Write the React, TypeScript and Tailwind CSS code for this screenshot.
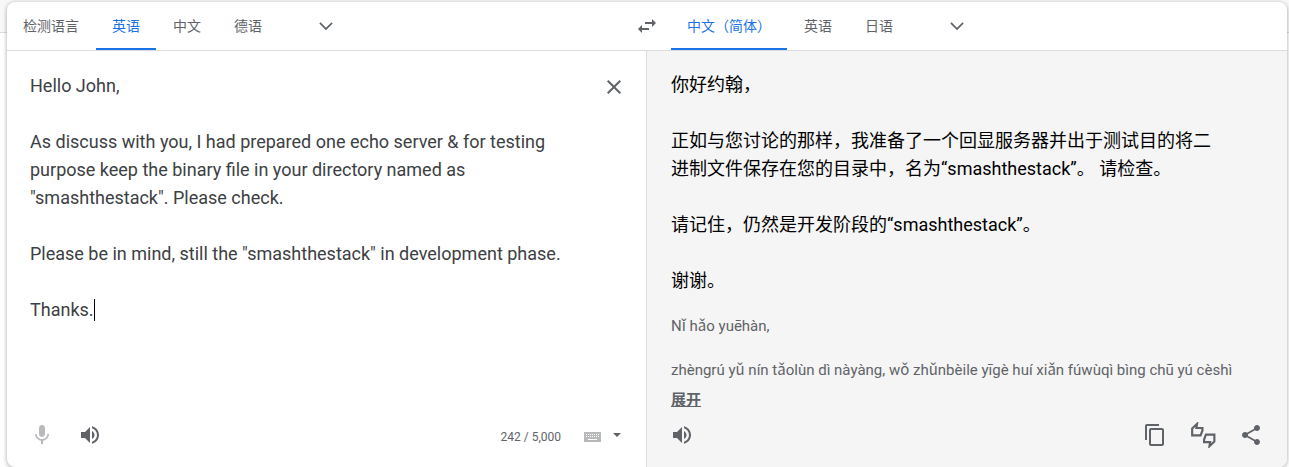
import { useState } from "react";
import type { ReactNode } from "react";

const SOURCE_TEXT = `Hello John,

As discuss with you, I had prepared one echo server & for testing purpose keep the binary file in your directory named as "smashthestack". Please check.

Please be in mind, still the "smashthestack" in development phase.

Thanks.`;

const TARGET_TEXT = `你好约翰，

正如与您讨论的那样，我准备了一个回显服务器并出于测试目的将二进制文件保存在您的目录中，名为“smashthestack”。 请检查。

请记住，仍然是开发阶段的“smashthestack”。

谢谢。`;

const PINYIN = `Nǐ hǎo yuēhàn,

zhèngrú yǔ nín tǎolùn dì nàyàng, wǒ zhǔnbèile yīgè huí xiǎn fúwùqì bìng chū yú cèshì`;

const ICONS = {
  chevron: "M5.41 7.59L4 9l8 8 8-8-1.41-1.41L12 14.17",
  swap: "M6.99 11L3 15l3.99 4v-3H14v-2H6.99v-3zM21 9l-3.99-4v3H10v2h7.01v3L21 9z",
  close: "M19 6.41L17.59 5 12 10.59 6.41 5 5 6.41 10.59 12 5 17.59 6.41 19 12 13.41 17.59 19 19 17.59 13.41 12z",
  mic: "M12 14c1.66 0 3-1.34 3-3V5c0-1.66-1.34-3-3-3S9 3.34 9 5v6c0 1.66 1.34 3 3 3zM17.3 11c0 3-2.54 5.1-5.3 5.1S6.7 14 6.7 11H5c0 3.41 2.72 6.23 6 6.72V21h2v-3.28c3.28-.48 6-3.3 6-6.72h-1.7z",
  sound:
    "M3 9v6h4l5 5V4L7 9H3zm13.5 3c0-1.77-1.02-3.29-2.5-4.03v8.05c1.48-.73 2.5-2.25 2.5-4.02zM14 3.23v2.06c2.89.86 5 3.54 5 6.71s-2.11 5.85-5 6.71v2.06c4.01-.91 7-4.49 7-8.77s-2.99-7.86-7-8.77z",
  copy: "M16 1H4c-1.1 0-2 .9-2 2v14h2V3h12V1zm3 4H8c-1.1 0-2 .9-2 2v14c0 1.1.9 2 2 2h11c1.1 0 2-.9 2-2V7c0-1.1-.9-2-2-2zm0 16H8V7h11v14z",
  share:
    "M18 16.08c-.76 0-1.44.3-1.96.77L8.91 12.7c.05-.23.09-.46.09-.7s-.04-.47-.09-.7l7.05-4.11c.54.5 1.25.81 2.04.81 1.66 0 3-1.34 3-3s-1.34-3-3-3-3 1.34-3 3c0 .24.04.47.09.7L8.04 9.81C7.5 9.31 6.79 9 6 9c-1.66 0-3 1.34-3 3s1.34 3 3 3c.79 0 1.5-.31 2.04-.81l7.12 4.16c-.05.21-.08.43-.08.65 0 1.61 1.31 2.92 2.92 2.92s2.92-1.31 2.92-2.92-1.31-2.92-2.92-2.92z",
};

function Icon({ d, className = "size-6" }: { d: string; className?: string }) {
  return (
    <svg viewBox="0 0 24 24" fill="currentColor" aria-hidden="true" className={className}>
      <path d={d} />
    </svg>
  );
}

function IconButton({ label, children, className = "" }: { label: string; children: ReactNode; className?: string }) {
  return (
    <button type="button" aria-label={label} className={`flex size-12 shrink-0 items-center justify-center ${className}`}>
      {children}
    </button>
  );
}

function LanguageTabs({ label, languages, initial }: { label: string; languages: string[]; initial: string }) {
  const [active, setActive] = useState(initial);
  return (
    <div className="flex h-12 items-stretch">
      <div role="tablist" aria-label={label} className="flex gap-px">
        {languages.map((name) => (
          <button
            key={name}
            type="button"
            role="tab"
            aria-selected={name === active}
            onClick={() => setActive(name)}
            className={`border-b-2 px-4 pt-0.5 text-sm whitespace-nowrap ${
              name === active ? "border-[#1a73e8] text-[#1a73e8]" : "border-transparent"
            }`}
          >
            {name}
          </button>
        ))}
      </div>
      <button type="button" aria-label="更多语言" className="ml-9 flex w-6 items-center justify-center">
        <Icon d={ICONS.chevron} className="size-5" />
      </button>
    </div>
  );
}

function ThumbsIcon() {
  return (
    <svg viewBox="0 0 24 24" fill="none" stroke="currentColor" strokeWidth="2" aria-hidden="true" className="size-[26px]">
      <path d="M2 6l4.500-4.300-.6 3.800H11.500v2.300L9.800 12.300H2z" />
      <path d="M22.500 18l-4.500 4.300.6-3.800H13v-2.300l1.700-4.500h7.800z" />
    </svg>
  );
}

export default function App() {
  const [text, setText] = useState(SOURCE_TEXT);
  return (
    <div className="bg-white font-['Roboto','Noto_Sans_CJK_SC',sans-serif] text-[#5f6368]">
      <div className="h-[33px] border-b border-[#dadce0] bg-[#f8f8f8]" />
      <main className="relative -mt-[31px] pr-0.5 pl-[7px]">
        <div className="overflow-hidden rounded-lg bg-white shadow-[0_1px_4px_rgba(0,0,0,0.37)]">
          <header className="grid grid-cols-2 border-b border-[#dadce0]">
            <div className="flex justify-between">
              <LanguageTabs label="源语言" languages={["检测语言", "英语", "中文", "德语"]} initial="英语" />
              <button type="button" aria-label="交换语言" className="-mr-3 flex w-6 items-center justify-center">
                <Icon d={ICONS.swap} />
              </button>
            </div>
            <div className="pl-6">
              <LanguageTabs label="目标语言" languages={["中文（简体）", "英语", "日语"]} initial="中文（简体）" />
            </div>
          </header>

          <div className="grid grid-cols-2">
            <section className="flex flex-col border-r border-[#dadce0]">
              <div className="flex grow items-start pr-2 pl-[23px]">
                <div className="relative flex grow self-stretch pt-[21px]">
                  <textarea
                    aria-label="源文本"
                    value={text}
                    spellCheck={false}
                    onChange={(e) => setText(e.target.value)}
                    className="grow resize-none overflow-hidden text-lg/7 text-[#3c4043] outline-none"
                  />
                  <span className="absolute top-[248px] left-16 h-[22px] w-px bg-black" />
                </div>
                <IconButton label="清除" className="mt-3">
                  <Icon d={ICONS.close} />
                </IconButton>
              </div>
              <div className="flex items-center pr-[25px] pb-2 pl-[11px]">
                <IconButton label="语音输入" className="text-[#b8b9bb]">
                  <Icon d={ICONS.mic} />
                </IconButton>
                <IconButton label="朗读原文">
                  <Icon d={ICONS.sound} />
                </IconButton>
                <span className="ml-auto pt-1 text-xs">242 / 5,000</span>
                <button type="button" aria-label="键盘" className="ml-[23px] pt-1 text-[#b8b9bb]">
                  <svg viewBox="0 0 17 10" fill="currentColor" aria-hidden="true" className="h-2.5 w-[17px]">
                    <path
                      fillRule="evenodd"
                      d="M0 0h17v10H0zM2 2v1h1V2zm2 0v1h1V2zm2 0v1h1V2zm2 0v1h1V2zm2 0v1h1V2zm2 0v1h1V2zm2 0v1h1V2zM2 4v1h1V4zm2 0v1h1V4zm2 0v1h1V4zm2 0v1h1V4zm2 0v1h1V4zm2 0v1h1V4zm2 0v1h1V4zM4 7v1h9V7z"
                    />
                  </svg>
                </button>
                <button type="button" aria-label="选择输入法" className="ml-3">
                  <svg viewBox="0 0 8 4" fill="currentColor" aria-hidden="true" className="h-1 w-2">
                    <path d="M0 0h8L4 4z" />
                  </svg>
                </button>
              </div>
            </section>

            <section className="flex flex-col bg-[#f5f5f5] pt-5">
              <p lang="zh-CN" className="pr-16 pl-6 text-lg/7 whitespace-pre-wrap text-black">
                {TARGET_TEXT}
              </p>
              <p className="px-6 pt-5 text-[15px]/[22px] whitespace-pre-wrap">{PINYIN}</p>
              <div className="px-6 pt-2">
                <button type="button" className="block text-[15px]/[22px] font-bold underline">
                  展开
                </button>
              </div>
              <div className="flex items-center pr-3 pb-2 pl-[11px]">
                <IconButton label="朗读译文" className="mr-auto">
                  <Icon d={ICONS.sound} />
                </IconButton>
                <IconButton label="复制译文">
                  <Icon d={ICONS.copy} />
                </IconButton>
                <IconButton label="评价译文">
                  <ThumbsIcon />
                </IconButton>
                <IconButton label="分享译文">
                  <Icon d={ICONS.share} />
                </IconButton>
              </div>
            </section>
          </div>
        </div>
      </main>
    </div>
  );
}
